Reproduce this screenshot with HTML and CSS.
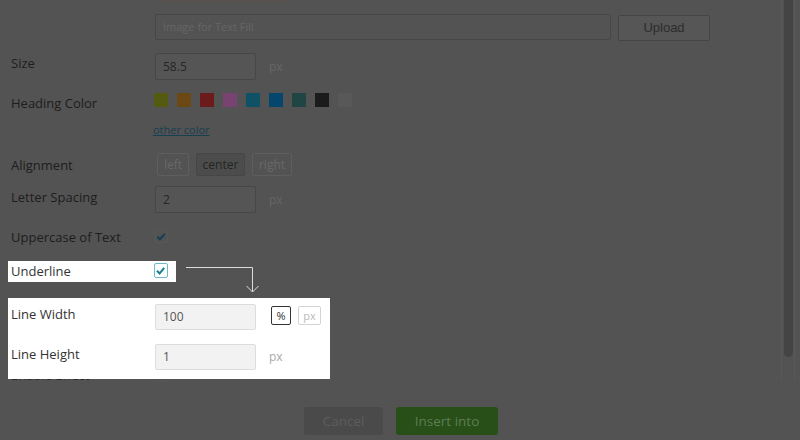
FILE: index.html
```html
<!DOCTYPE html>
<html>
<head>
<meta charset="utf-8">
<link rel="stylesheet" href="styles.css">
</head>
<body>
<div class="form">
  <div class="top-edge"></div>

  <div class="row r-image">
    <div class="lbl"></div>
    <div class="file">Image for Text Fill</div>
    <div class="upload">Upload</div>
  </div>

  <div class="row r-size">
    <div class="lbl pad1">Size</div>
    <div class="inp">58.5</div>
    <div class="unit">px</div>
  </div>

  <div class="row r-color">
    <div class="lbl pad1">Heading Color</div>
    <div class="swatches">
      <span class="sw" style="background:#545a0f"></span>
      <span class="sw" style="background:#6c4914"></span>
      <span class="sw" style="background:#6b1b1b"></span>
      <span class="sw" style="background:#784370"></span>
      <span class="sw" style="background:#0f5266"></span>
      <span class="sw" style="background:#05466c"></span>
      <span class="sw" style="background:#204644"></span>
      <span class="sw" style="background:#1b1b1b"></span>
      <span class="sw" style="background:#585858"></span>
    </div>
  </div>

  <div class="row r-other">
    <div class="lbl"></div>
    <a class="other">other color</a>
  </div>

  <div class="row r-align">
    <div class="lbl pad3">Alignment</div>
    <div class="aligns">
      <span class="abtn a-left">left</span>
      <span class="abtn a-center">center</span>
      <span class="abtn a-right">right</span>
    </div>
  </div>

  <div class="row r-spacing">
    <div class="lbl pad2">Letter Spacing</div>
    <div class="inp">2</div>
    <div class="unit">px</div>
  </div>

  <div class="row r-upper">
    <div class="lbl">Uppercase of Text</div>
    <div class="chk-dim">
      <svg width="13" height="13" viewBox="0 0 13 13"><path d="M2.5 6.8 L5.3 9.6 L10.6 3.6" fill="none" stroke="#123f57" stroke-width="2.2"/></svg>
    </div>
  </div>

  <div class="row hl-row">
    <div class="lbl hl-lbl pad1">Underline</div>
    <div class="chk">
      <svg width="14" height="15" viewBox="0 0 14 15"><path d="M3.2 7.8 L6 10.6 L11 4.6" fill="none" stroke="#1b7f99" stroke-width="2.2"/></svg>
    </div>
  </div>

  <div class="panel">
    <div class="row prow">
      <div class="lbl hl-lbl pad1">Line Width</div>
      <div class="inp light">100</div>
      <span class="ubtn u-on">%</span>
      <span class="ubtn u-off">px</span>
    </div>
    <div class="row prow prow2">
      <div class="lbl hl-lbl pad1">Line Height</div>
      <div class="inp light">1</div>
      <div class="unit light-unit">px</div>
    </div>
  </div>

  <div class="row r-hidden">
    <div class="lbl">Enable Effect</div>
    <div class="chk-dim hidden-chk"></div>
  </div>
</div>

<div class="actions">
  <span class="btn cancel">Cancel</span>
  <span class="btn insert">Insert into</span>
</div>

<svg class="connector" width="90" height="40" viewBox="0 0 90 40">
  <path d="M6 7.5 H72.5 V32" fill="none" stroke="#dcdcdc" stroke-width="1"/>
  <path d="M66.5 26 L72.5 32 L78.5 26" fill="none" stroke="#dcdcdc" stroke-width="1"/>
</svg>

<div class="scrollbar"><div class="thumb"></div></div>
</body>
</html>
```

FILE: styles.css
```css
html, body {
  margin: 0;
  padding: 0;
}
body {
  width: 800px;
  height: 440px;
  overflow: hidden;
  position: relative;
  background: #535353;
  font-family: "Open Sans", "Noto Sans", sans-serif;
  color: #1f1f1f;
}
.form {
  padding-left: 8px;
}
.top-edge {
  margin-left: 149px;
  width: 133px;
  height: 2px;
  background: #595050;
}
.row {
  display: flex;
  align-items: flex-start;
  padding-left: 3px;
}
.lbl {
  width: 144px;
  flex: none;
  font-size: 13px;
  line-height: 18px;
  color: #1d1d1d;
  white-space: nowrap;
}
.pad1 { padding-top: 1px; }
.pad2 { padding-top: 2px; }
.pad3 { padding-top: 3px; }

.r-image {
  margin-top: 12px;
  height: 27px;
}
.file {
  width: 456px;
  height: 26px;
  box-sizing: border-box;
  border: 1px solid #474747;
  border-radius: 2px;
  font-size: 11px;
  line-height: 24px;
  color: #666666;
  padding-left: 7px;
}
.upload {
  margin-left: 7px;
  margin-top: 1px;
  width: 92px;
  height: 26px;
  box-sizing: border-box;
  border: 1px solid #454545;
  border-radius: 2px;
  background: #565656;
  font-family: "Liberation Sans", Arial, sans-serif;
  font-size: 13px;
  line-height: 24px;
  text-align: center;
  color: #2c2c2c;
}

.inp {
  width: 101px;
  height: 27px;
  box-sizing: border-box;
  border: 1px solid #474747;
  border-radius: 2px;
  background: #555555;
  font-size: 12px;
  line-height: 25px;
  padding-left: 7px;
  color: #262626;
}
.unit {
  margin-left: 13px;
  font-size: 12px;
  line-height: 27px;
  color: #666666;
}

.r-size { margin-top: 12px; }

.r-color { margin-top: 13px; }
.swatches {
  display: flex;
  margin-left: -1px;
}
.sw {
  width: 14px;
  height: 14px;
  margin-right: 9px;
}

.r-other { margin-top: 10px; }
.other {
  font-size: 11px;
  line-height: 16px;
  color: #173f52;
  text-decoration: underline;
  margin-left: -2px;
}

.r-align { margin-top: 15px; }
.aligns {
  display: flex;
  margin-left: 2px;
  gap: 7px;
}
.abtn {
  height: 23px;
  box-sizing: border-box;
  border: 1px solid #5e5e5e;
  border-radius: 2px;
  font-size: 12px;
  line-height: 21px;
  text-align: center;
  color: #686868;
}
.a-left { width: 32px; }
.a-center {
  width: 49px;
  background: #4c4c4c;
  border-color: #464646;
  color: #242424;
}
.a-right { width: 40px; }

.r-spacing { margin-top: 10px; }

.r-upper { margin-top: 15px; }
.chk-dim {
  margin-top: 2px;
  width: 13px;
  height: 13px;
  box-sizing: border-box;
  border: 1px solid #575757;
  border-radius: 2px;
  display: flex;
}
.chk-dim svg { margin: -1px 0 0 -1px; }

.hl-row {
  margin-top: 15px;
  width: 168px;
  height: 21px;
  box-sizing: border-box;
  background: #ffffff;
  position: relative;
  z-index: 2;
}
.hl-lbl { color: #333333; }
.chk {
  margin-top: 2px;
  margin-left: -1px;
  width: 14px;
  height: 15px;
  box-sizing: border-box;
  border: 1px solid #6fb9c9;
  border-radius: 2px;
  display: flex;
}
.chk svg { margin: -1px 0 0 -1px; }

.panel {
  margin-top: 16px;
  width: 322px;
  box-sizing: border-box;
  padding: 6px 0 9px 0;
  background: #ffffff;
  position: relative;
  z-index: 2;
}
.prow2 { margin-top: 14px; }
.inp.light {
  height: 26px;
  line-height: 24px;
  background: #f2f2f2;
  border-color: #dddddd;
  color: #555555;
}
.ubtn {
  margin-top: 2px;
  height: 19px;
  box-sizing: border-box;
  border-radius: 2px;
  font-size: 11px;
  line-height: 17px;
  text-align: center;
}
.u-on {
  margin-left: 15px;
  width: 20px;
  border: 1px solid #333333;
  color: #333333;
}
.u-off {
  margin-left: 7px;
  width: 23px;
  border: 1px solid #d4d4d4;
  color: #bbbbbb;
}
.light-unit {
  line-height: 26px;
  color: #a8a8a8;
}

.r-hidden {
  margin-top: -13px;
  position: relative;
  z-index: 1;
}
.r-hidden .lbl { color: #2a2a2a; }
.hidden-chk { margin-top: 3px; }

.actions {
  margin-top: 23px;
  display: flex;
  justify-content: center;
  gap: 13px;
  padding-left: 2px;
}
.btn {
  height: 28px;
  border-radius: 3px;
  font-size: 13.5px;
  line-height: 28px;
  text-align: center;
}
.cancel {
  width: 79px;
  background: #4a4a4a;
  color: #5d5d5d;
}
.insert {
  width: 102px;
  background: #284f18;
  color: #5f7d53;
}

.connector {
  position: absolute;
  left: 180px;
  top: 260px;
  z-index: 3;
}

.scrollbar {
  position: absolute;
  left: 781px;
  top: 0;
  width: 14px;
  height: 380px;
  box-sizing: border-box;
  border-left: 1px solid #595959;
  border-right: 1px solid #595959;
}
.thumb {
  margin-left: 2px;
  width: 9px;
  height: 357px;
  background: #444444;
  border-radius: 0 0 5px 5px;
}
```
